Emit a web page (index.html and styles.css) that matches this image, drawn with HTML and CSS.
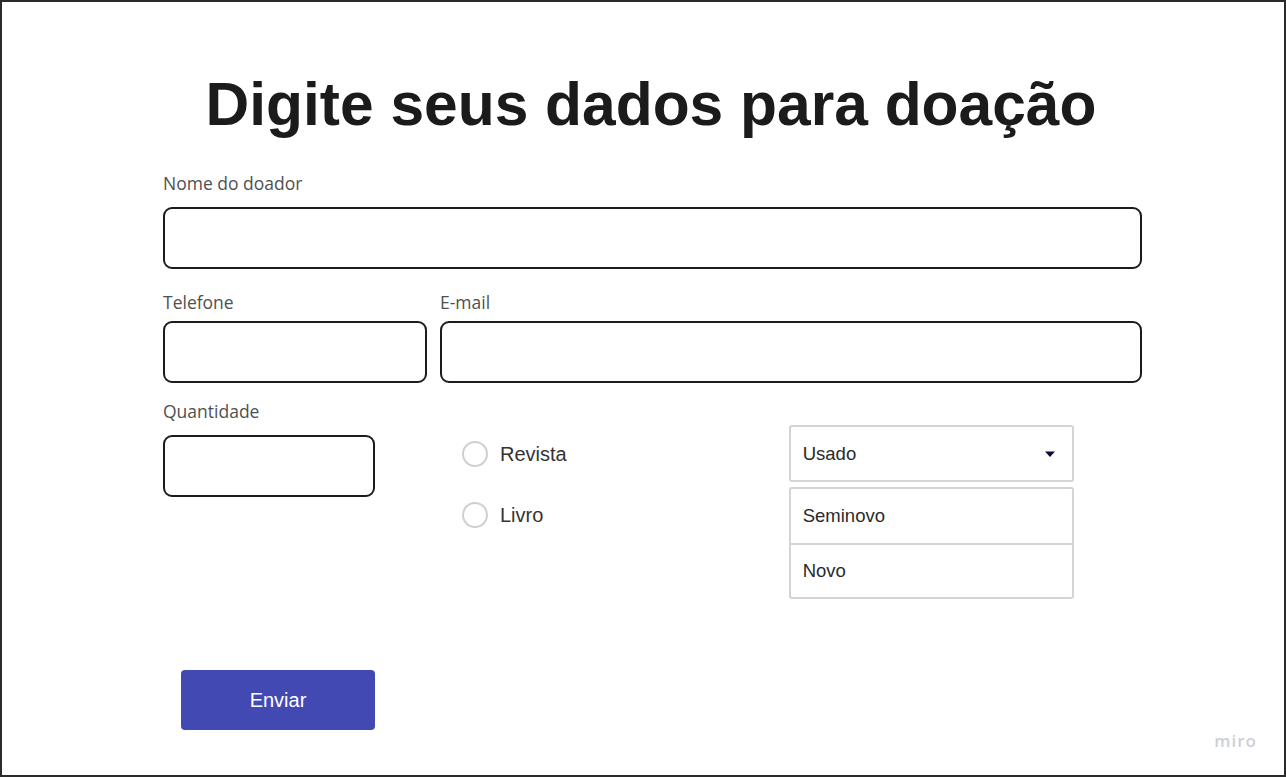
FILE: index.html
```html
<!DOCTYPE html>
<html lang="pt">
<head>
<meta charset="utf-8">
<title>Doação</title>
<link rel="stylesheet" href="styles.css">
</head>
<body>
<div class="frame">
  <h1 class="title">Digite seus dados para doação</h1>
  <form class="form">
    <div class="field field-name">
      <label class="label">Nome do doador</label>
      <div class="input input-full"></div>
    </div>
    <div class="row row-2">
      <div class="field">
        <label class="label">Telefone</label>
        <div class="input input-tel"></div>
      </div>
      <div class="field field-grow">
        <label class="label">E-mail</label>
        <div class="input input-email"></div>
      </div>
    </div>
    <div class="row row-3">
      <div class="field field-qty">
        <label class="label">Quantidade</label>
        <div class="input input-qty"></div>
      </div>
      <div class="radios">
        <div class="radio"><span class="circle"></span><span class="radio-text">Revista</span></div>
        <div class="radio"><span class="circle"></span><span class="radio-text">Livro</span></div>
      </div>
      <div class="select-wrap">
        <div class="select">
          <span>Usado</span>
          <svg class="caret" width="12" height="8" viewBox="0 0 12 8"><path d="M1 1.5 L11 1.5 L6 7 Z" fill="#0c0b3b"/></svg>
        </div>
        <div class="options">
          <div class="option">Seminovo</div>
          <div class="option">Novo</div>
        </div>
      </div>
    </div>
    <div class="actions">
      <button type="button" class="btn">Enviar</button>
    </div>
  </form>
  <div class="miro">miro</div>
</div>
</body>
</html>
```
FILE: styles.css
```css
* { box-sizing: border-box; }
html, body { margin: 0; padding: 0; background: #fff; }
body { font-family: "Liberation Sans", Arial, sans-serif; color: #1b1b1b; }

.frame {
  position: relative;
  width: 1286px;
  height: 777px;
  border: 2px solid #2b2b2b;
  overflow: hidden;
}

.title {
  margin: 0;
  padding-top: 62px;
  padding-left: 16px;
  text-align: center;
  font-size: 60.5px;
  line-height: 80px;
  font-weight: 700;
  color: #1b1b1b;
}

.form {
  margin-left: 161px;
  width: 979px;
  padding-top: 28px;
}

.field { display: flex; flex-direction: column; }
.field-grow { flex: 1; }

.label {
  font-family: "Open Sans", "Noto Sans", sans-serif;
  font-size: 17.5px;
  font-weight: 400;
  line-height: 22px;
  color: #505050;
  margin-bottom: 13px;
}

.input {
  height: 62px;
  border: 2px solid #1c1c1c;
  border-radius: 9px;
  background: #fff;
}
.input-full { width: 979px; margin-bottom: 22px; }
.input-tel { width: 264px; }
.input-email { width: 702px; }
.input-qty { width: 212px; }

.row { display: flex; }
.row-2 { gap: 13px; }
.row-2 .label { margin-bottom: 8px; }

.row-3 { margin-top: 17px; align-items: flex-start; }
.field-qty { width: 212px; }

.radios {
  margin-left: 87px;
  margin-top: 41px;
  display: flex;
  flex-direction: column;
  gap: 35px;
}
.radio { display: flex; align-items: center; height: 26px; }
.circle {
  width: 26px;
  height: 26px;
  border: 2px solid #cfcfcf;
  border-radius: 50%;
  margin-right: 12px;
}
.radio-text { font-size: 20px; color: #333; }

.select-wrap {
  margin-left: 222px;
  margin-top: 25px;
  width: 285px;
}
.select {
  height: 57px;
  border: 2px solid #d4d4d4;
  border-radius: 3px;
  display: flex;
  align-items: center;
  justify-content: space-between;
  padding: 0 16px 0 12px;
  font-size: 18.5px;
  color: #2a2a2a;
}
.caret { display: block; margin-top: 1px; }
.options {
  margin-top: 5px;
  border: 2px solid #d4d4d4;
  border-radius: 3px;
}
.option {
  height: 54px;
  display: flex;
  align-items: center;
  padding-left: 12px;
  font-size: 18.5px;
  color: #2a2a2a;
}
.option + .option { border-top: 2px solid #d4d4d4; }

.actions { padding-left: 18px; margin-top: 71px; }
.btn {
  width: 194px;
  height: 60px;
  border: none;
  border-radius: 4px;
  background: #4349b2;
  color: #fff;
  font-family: "Liberation Sans", Arial, sans-serif;
  font-size: 20px;
}

.miro {
  position: absolute;
  right: 27px;
  bottom: 23px;
  font-family: "Open Sans", "Noto Sans", sans-serif;
  font-size: 17px;
  font-weight: 600;
  letter-spacing: 1px;
  color: #cdd0d6;
}
```
